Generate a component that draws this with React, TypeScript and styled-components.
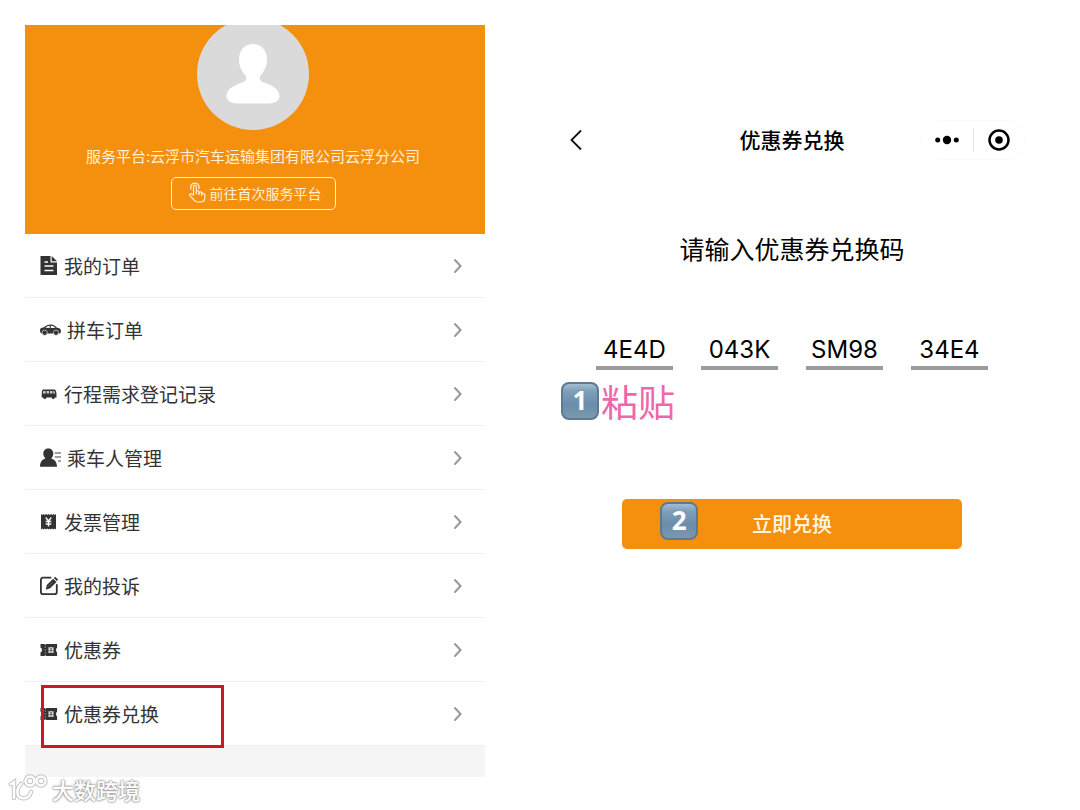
import React from "react";
import styled, { createGlobalStyle } from "styled-components";

const GlobalStyle = createGlobalStyle`
  *, *::before, *::after { box-sizing: border-box; }
  body {
    margin: 0;
    background: #fff;
    color: #333;
    font-family: "Noto Sans CJK SC", "Liberation Sans", sans-serif;
  }
  button, input { font-family: inherit; margin: 0; }
`;

const Page = styled.div`
  position: relative;
  display: grid;
  grid-template-columns: 460fr 492fr;
  column-gap: 61px;
  align-items: start;
  min-height: 100vh;
  padding: 25px 42px 32px 25px;
`;

const Account = styled.section`
  background: #f5f5f5;
  padding-bottom: 31px;
`;

const Profile = styled.header`
  display: flex;
  flex-direction: column;
  align-items: center;
  height: 209px;
  padding-right: 4px;
  overflow: hidden;
  background: #f58f0e;
  color: #fff1da;
`;

const Avatar = styled.svg`
  flex: none;
  width: 112px;
  height: 112px;
  margin-top: -7px;
`;

const Platform = styled.p`
  margin: 14px 0 10px;
  font-size: 15px;
  line-height: 23px;
  white-space: nowrap;
`;

const PlatformButton = styled.button`
  display: flex;
  align-items: center;
  gap: 3px;
  height: 33px;
  padding: 0 13px 2px 16px;
  border: 1px solid #fff1da;
  border-radius: 5px;
  background: transparent;
  color: inherit;
  font-size: 14px;
  line-height: 20px;
  white-space: nowrap;
`;

const Menu = styled.ul`
  margin: 0;
  padding: 0;
  list-style: none;
  background: #fff;
`;

const MenuItem = styled.li`
  position: relative;
  border-bottom: 1px solid #efefef;
`;

const MenuLink = styled.a`
  display: flex;
  align-items: center;
  gap: 6px;
  height: 63px;
  padding: 0 22px 0 15px;
  color: #333;
  font-size: 19px;
  line-height: 28px;
  text-decoration: none;
`;

const MenuLabel = styled.span`
  flex: 1;
`;

const Highlight = styled.span`
  position: absolute;
  top: 3px;
  left: 16px;
  width: 183px;
  height: 63px;
  border: 3px solid #cb1a1c;
  pointer-events: none;
`;

const Redeem = styled.main`
  display: flex;
  flex-direction: column;
  padding-top: 95px;
  color: #000;
`;

const NavBar = styled.header`
  display: grid;
  grid-template-columns: 1fr auto 1fr;
  align-items: center;
  height: 40px;
  padding: 0 12px;
`;

const IconButton = styled.button`
  display: flex;
  justify-content: center;
  align-items: center;
  padding: 0;
  border: 0;
  background: transparent;
  color: #000;
`;

const BackButton = styled(IconButton)`
  justify-self: start;
  padding-left: 9px;
`;

const Title = styled.h1`
  margin: 0;
  padding-bottom: 3px;
  font-size: 21px;
  font-weight: 500;
  line-height: 30px;
`;

const Capsule = styled.div`
  display: flex;
  align-items: center;
  justify-self: end;
  height: 40px;
  width: 106px;
  border: 1px solid #fafafa;
  border-radius: 20px;

  ${IconButton} {
    flex: 1;
    height: 24px;
  }

  ${IconButton} + ${IconButton} {
    border-left: 1px solid #e6e6e6;
  }
`;

const Prompt = styled.h2`
  margin: 69px 0 0;
  font-size: 25px;
  font-weight: 400;
  line-height: 38px;
  text-align: center;
`;

const CodeRow = styled.div`
  display: flex;
  justify-content: center;
  gap: 28px;
  margin-top: 62px;
`;

const CodeInput = styled.input`
  width: 77px;
  height: 41px;
  padding: 3px 0 0;
  border: 0;
  border-bottom: 4px solid #9b9b9b;
  border-radius: 0;
  background: transparent;
  color: #000;
  font-family: Inter, "Liberation Sans", sans-serif;
  font-size: 24px;
  line-height: 32px;
  text-align: center;
`;

const PasteNote = styled.p`
  display: flex;
  align-items: center;
  gap: 2px;
  margin: 10px 0 0 15px;
  color: #f066ab;
  font-size: 37px;
  font-weight: 400;
  line-height: 42px;
`;

const Keycap = styled.span`
  display: inline-flex;
  justify-content: center;
  align-items: center;
  width: 38px;
  height: 38px;
  padding-bottom: 2px;
  border: 2px solid #5d7a91;
  border-radius: 8px;
  background: linear-gradient(#a3bdd1 0%, #7fa0bb 20%, #6a8daa 60%, #7b98ae 100%);
  color: #fff;
  font-family: "Open Sans", "Noto Sans", sans-serif;
  font-size: 26px;
  font-weight: 700;
  line-height: 32px;
`;

const SubmitArea = styled.div`
  position: relative;
  width: 69%;
  margin: 77px auto 0;

  ${Keycap} {
    position: absolute;
    top: 3px;
    left: 38px;
    pointer-events: none;
  }
`;

const SubmitButton = styled.button`
  display: block;
  width: 100%;
  height: 50px;
  padding: 0;
  border: 0;
  border-radius: 5px;
  background: #f58f0e;
  color: #fff8e6;
  font-size: 20px;
  font-weight: 500;
  line-height: 28px;
`;

const Watermark = styled.div`
  position: absolute;
  left: 8px;
  bottom: 6px;
  display: flex;
  align-items: center;
  gap: 4px;
  color: #fff;
  font-size: 22px;
  font-weight: 500;
  line-height: 30px;
  text-shadow: 0 0 2px #8d8d8d, 0 0 2px #a5a5a5, 0 0 3px #b5b5b5;
`;

const FileIcon = () => (
  <svg width="18" height="20" viewBox="0 0 18 20" aria-hidden="true">
    <path d="M.5 0h10v6.500H17V19H.5z" fill="#333" />
    <path d="M11.700 0v5.300H17z" fill="#333" />
    <path d="M4.500 6h3.500M4.500 10h9M4.500 14.500h9" stroke="#fff" strokeWidth="1.300" />
  </svg>
);

const CarIcon = () => (
  <svg width="21" height="12" viewBox="0 0 21 12" aria-hidden="true">
    <path
      d="M0 5.500 1 4l3-.7C6 1.300 8 .5 10.500.5c3.200 0 4.800 1.300 6.500 3.200l3 .8 1 2.300-.4 2.200-1.300.6H1.500L.3 8.600z"
      fill="#333"
    />
    <path d="M5.500 3.700C7 2.200 8 1.800 9.600 1.700v2.200zM10.800 1.700c2 0 3.300.7 4.500 2.200l-4.500.1z" fill="#fff" />
    <circle cx="4.700" cy="8.700" r="2.600" fill="#333" stroke="#fff" strokeWidth=".6" />
    <circle cx="16" cy="8.700" r="2.600" fill="#333" stroke="#fff" strokeWidth=".6" />
  </svg>
);

const BusIcon = () => (
  <svg width="18" height="12" viewBox="0 0 18 12" aria-hidden="true">
    <path d="M3.500 1.500h10.800c1.200 0 1.800 1 2.200 4.500v3.500H1.700V6C1.900 2.500 2.300 1.500 3.500 1.500z" fill="#333" />
    <path d="M3.300 3h2.400v2.600H2.900zM6.700 3h2.400v2.600H6.700zM10 3h2.400v2.600H10zM13.300 3h1.200l.7 2.600h-1.900z" fill="#ccc" />
    <circle cx="4.800" cy="9.500" r="1.500" fill="#333" />
    <circle cx="13.300" cy="9.500" r="1.500" fill="#333" />
  </svg>
);

const PassengerIcon = () => (
  <svg width="21" height="20" viewBox="0 0 21 20" aria-hidden="true">
    <path
      d="M8.300.5c2.900 0 5 2.100 5 5 0 2-.9 3.900-2.100 4.900 3.200 1 5.400 2.700 5.900 8.400H0c.2-5.700 2.300-7.400 5.400-8.400-1.200-1-2.100-2.900-2.100-4.900 0-2.900 2.100-5 5-5z"
      fill="#333"
    />
    <path d="M14.700 5H21M14.700 9H21M18 13h3" stroke="#444" strokeWidth="1.200" />
  </svg>
);

const InvoiceIcon = () => (
  <svg width="18" height="18" viewBox="0 0 18 18" aria-hidden="true">
    <path
      d="M1 1l1.250 1 1.250-1 1.250 1L6 1l1.250 1 1.250-1 1.250 1 1.250-1 1.250 1 1.250-1 1.250 1L16 1v15.500l-1.250-1-1.250 1-1.250-1-1.250 1-1.250-1-1.250 1-1.250-1-1.250 1-1.250-1-1.250 1-1.250-1-1.250 1z"
      fill="#333"
    />
    <path d="M5.700 4.500 8.500 8l2.800-3.500M8.500 8v5.500M5.700 8.500h5.600M5.700 11h5.600" stroke="#fff" strokeWidth="1.300" fill="none" />
  </svg>
);

const ComplaintIcon = () => (
  <svg width="18" height="20" viewBox="0 0 18 20" aria-hidden="true">
    <path
      d="M10.500 1.700H3C1.600 1.700.9 2.500.9 3.900v12c0 1.400.7 2.200 2.100 2.200h11.700c1.400 0 2.100-.8 2.100-2.200V9"
      fill="none"
      stroke="#333"
      strokeWidth="1.800"
      strokeLinecap="round"
    />
    <path d="M5.800 13.700l1-4.700 6.400-6.300 3.300 3.200-6.300 6.300z" fill="#333" />
    <path d="M13.800 2.100 15.200.7l2.900 3-1.200 1.400z" fill="#333" />
    <path d="M8.200 10.600l4.500-4.500" stroke="#888" strokeWidth=".6" />
  </svg>
);

const CouponIcon = () => (
  <svg width="18" height="14" viewBox="0 0 18 14" aria-hidden="true">
    <path d="M.5 1h4l.8.9.8-.9h11v3.800c-1.300.3-1.300 4.100 0 4.400V13h-11l-.8-.9-.8.900h-4V9.200c2-.3 2-4.100 0-4.400z" fill="#333" />
    <path d="M5.300 3.500v1M5.300 6.500v1M5.300 9.500v1" stroke="#ddd" strokeWidth=".9" />
    <path d="M8.500 4h5v6h-5z" fill="#ddd" />
    <path d="M9.300 4l1.700 2.300L12.700 4M11 6.300V10M9.300 7.500h3.400" stroke="#444" strokeWidth=".7" fill="none" />
  </svg>
);

const HandIcon = () => (
  <svg
    width="19"
    height="21"
    viewBox="0 0 19 21"
    fill="none"
    stroke="currentColor"
    strokeWidth="1.200"
    strokeLinecap="round"
    strokeLinejoin="round"
    aria-hidden="true"
  >
    <path d="M5.500 13V4.700c0-2 2.800-2 2.800 0V10c0-1.700 2.700-1.700 2.700.2v.8c.2-1.500 2.800-1.400 2.800.4v.7c.4-1.300 3-1.200 3 .6v3c0 2.900-1.800 4.300-4.500 4.300H9.700c-1.700 0-2.700-.7-3.600-1.900l-4.200-4.400c-1-1.600.8-2.700 2-1.500z" />
    <path d="M8.300 10v2M11 11v1.600M13.800 12.100v1.500" />
    <path d="M3 7C1.800 3.800 3.800 1.200 6.900 1.200s5 2.800 3.900 5.600" />
  </svg>
);

const Chevron = () => (
  <svg width="10" height="16" viewBox="0 0 10 16" fill="none" aria-hidden="true">
    <path d="M2 2l5.500 6L2 14" stroke="#999" strokeWidth="2" strokeLinecap="round" />
  </svg>
);

const menu = [
  { label: "我的订单", Icon: FileIcon },
  { label: "拼车订单", Icon: CarIcon },
  { label: "行程需求登记记录", Icon: BusIcon },
  { label: "乘车人管理", Icon: PassengerIcon },
  { label: "发票管理", Icon: InvoiceIcon },
  { label: "我的投诉", Icon: ComplaintIcon },
  { label: "优惠券", Icon: CouponIcon },
  { label: "优惠券兑换", Icon: CouponIcon, highlighted: true },
];

const codes = ["4E4D", "043K", "SM98", "34E4"];

export default function App() {
  return (
    <>
      <GlobalStyle />
      <Page>
        <Account>
          <Profile>
            <Avatar viewBox="0 0 112 112" role="img" aria-label="头像">
              <circle cx="56" cy="56" r="56" fill="#dadada" />
              <path
                d="M56 26c8.500 0 14 6.500 14 15.500 0 6.500-2.500 11.500-6 15.500-2.500 3.500-1 6 2.500 7.500 9 2.500 16 7 16 13.500 0 5-5 7.500-12 7.500h-28.500c-7.500 0-12.500-2.500-12.500-7.500 0-6.500 7.500-11 16-13.500 3.500-1.500 5-4 2.500-7.500-3.500-4-6-9-6-15.500C42 32.500 47.500 26 56 26z"
                fill="#fff"
              />
            </Avatar>
            <Platform>服务平台:云浮市汽车运输集团有限公司云浮分公司</Platform>
            <PlatformButton type="button">
              <HandIcon />
              前往首次服务平台
            </PlatformButton>
          </Profile>
          <nav>
            <Menu>
              {menu.map(({ label, Icon, highlighted }) => (
                <MenuItem key={label}>
                  <MenuLink href="#">
                    <Icon />
                    <MenuLabel>{label}</MenuLabel>
                    <Chevron />
                  </MenuLink>
                  {highlighted && <Highlight />}
                </MenuItem>
              ))}
            </Menu>
          </nav>
        </Account>

        <Redeem>
          <NavBar>
            <BackButton type="button" aria-label="返回">
              <svg width="18" height="24" viewBox="0 0 18 24" fill="none" aria-hidden="true">
                <path d="M14 2.500 4.500 12l9.500 9.500" stroke="#111" strokeWidth="1.800" />
              </svg>
            </BackButton>
            <Title>优惠券兑换</Title>
            <Capsule>
              <IconButton type="button" aria-label="更多">
                <svg width="24" height="10" viewBox="0 0 24 10" aria-hidden="true">
                  <circle cx="2.700" cy="5" r="2.500" />
                  <circle cx="12" cy="5" r="4.200" />
                  <circle cx="21.300" cy="5" r="2.500" />
                </svg>
              </IconButton>
              <IconButton type="button" aria-label="关闭">
                <svg width="22" height="22" viewBox="0 0 22 22" aria-hidden="true">
                  <circle cx="11" cy="11" r="9.500" fill="none" stroke="#000" strokeWidth="2.500" />
                  <circle cx="11" cy="11" r="3.800" />
                </svg>
              </IconButton>
            </Capsule>
          </NavBar>
          <Prompt>请输入优惠券兑换码</Prompt>
          <CodeRow>
            {codes.map((code, index) => (
              <CodeInput key={code} aria-label={`兑换码第${index + 1}段`} defaultValue={code} maxLength={4} />
            ))}
          </CodeRow>
          <PasteNote>
            <Keycap>1</Keycap>
            粘贴
          </PasteNote>
          <SubmitArea>
            <SubmitButton type="button">立即兑换</SubmitButton>
            <Keycap>2</Keycap>
          </SubmitArea>
        </Redeem>

        <Watermark>
          <svg width="40" height="30" viewBox="0 0 40 30" fill="none" strokeLinecap="round" aria-hidden="true">
            <g stroke="#c4c4c4" strokeWidth="4.500">
              <path d="M3 10l3-2v16M13 10c-5 5-5 13 1 14 5 1 8-2 9-6" />
              <circle cx="22" cy="7" r="4.500" />
              <circle cx="33" cy="7" r="4.500" />
            </g>
            <g stroke="#fff" strokeWidth="2.500">
              <path d="M3 10l3-2v16M13 10c-5 5-5 13 1 14 5 1 8-2 9-6" />
              <circle cx="22" cy="7" r="4.500" />
              <circle cx="33" cy="7" r="4.500" />
            </g>
          </svg>
          大数跨境
        </Watermark>
      </Page>
    </>
  );
}
